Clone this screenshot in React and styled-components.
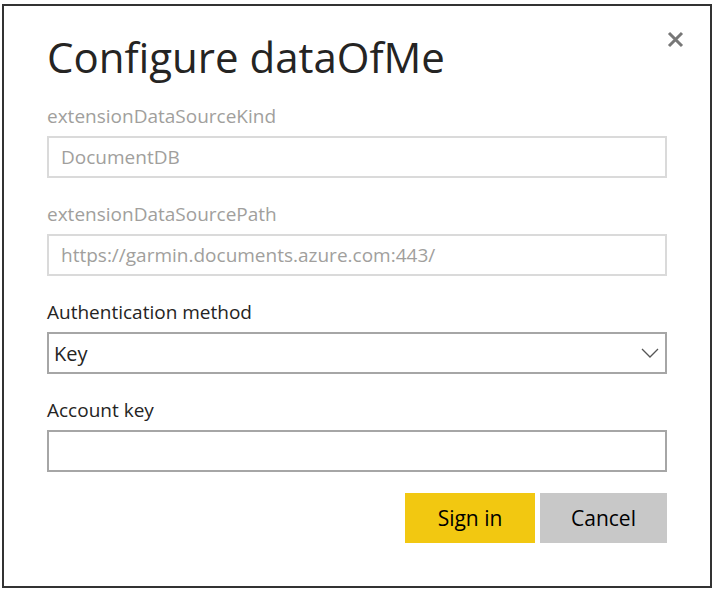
import React, { useState } from "react";
import styled, { createGlobalStyle } from "styled-components";

const GlobalStyle = createGlobalStyle`
  html, body {
    margin: 0;
    padding: 0;
    background: #fff;
    font-family: "Open Sans", "Noto Sans", sans-serif;
  }
  * { box-sizing: border-box; }
`;

const Dialog = styled.div`
  position: relative;
  width: 710px;
  height: 584px;
  margin: 4px 0 0 2px;
  border: 2px solid #333;
  background: #fff;
  padding: 21px 43px 0 43px;
`;

const Title = styled.h1`
  margin: 0 0 17px;
  font-size: 42px;
  font-weight: 400;
  line-height: 60px;
  color: #252423;
`;

const Close = styled.button`
  position: absolute;
  top: 20px;
  right: 22px;
  width: 26px;
  height: 26px;
  padding: 0;
  border: none;
  background: none;
  cursor: pointer;
  display: flex;
  align-items: center;
  justify-content: center;
`;

const Field = styled.div`
  margin-bottom: 24px;
`;

const Label = styled.label`
  display: block;
  font-size: 19px;
  line-height: 24px;
  margin-bottom: 8px;
  color: ${(p) => (p.disabled ? "#a19f9d" : "#252423")};
`;

const Input = styled.input`
  display: block;
  width: 620px;
  height: 42px;
  border: 2px solid ${(p) => (p.disabled ? "#dadada" : "#a6a6a6")};
  background: #fff;
  padding: 0 12px;
  font-family: inherit;
  font-size: 19px;
  color: ${(p) => (p.disabled ? "#a19f9d" : "#252423")};
  outline: none;
  &:disabled { background: #fff; }
`;

const Select = styled.div`
  display: flex;
  align-items: center;
  justify-content: space-between;
  width: 620px;
  height: 42px;
  border: 2px solid #a6a6a6;
  padding: 0 6px 0 5px;
  font-size: 20px;
  color: #252423;
  cursor: pointer;
`;

const Actions = styled.div`
  display: flex;
  justify-content: flex-end;
  gap: 5px;
  width: 620px;
  margin-top: -3px;
`;

const Button = styled.button`
  width: ${(p) => p.w}px;
  height: 50px;
  border: none;
  background: ${(p) => (p.primary ? "#f2c811" : "#c8c8c8")};
  color: #000;
  font-family: inherit;
  font-size: 21px;
  cursor: pointer;
`;

export default function App() {
  const [key, setKey] = useState("");
  return (
    <>
      <GlobalStyle />
      <Dialog>
        <Title>Configure dataOfMe</Title>
        <Close aria-label="Close">
          <svg width="17" height="17" viewBox="0 0 17 17">
            <path d="M2 2 L15 15 M15 2 L2 15" stroke="#777" strokeWidth="3" />
          </svg>
        </Close>
        <Field>
          <Label disabled>extensionDataSourceKind</Label>
          <Input disabled value="DocumentDB" readOnly />
        </Field>
        <Field>
          <Label disabled>extensionDataSourcePath</Label>
          <Input disabled value="https://garmin.documents.azure.com:443/" readOnly />
        </Field>
        <Field>
          <Label>Authentication method</Label>
          <Select>
            <span>Key</span>
            <svg width="18" height="10" viewBox="0 0 18 10">
              <path d="M1 1 L9 9 L17 1" fill="none" stroke="#555" strokeWidth="1.3" />
            </svg>
          </Select>
        </Field>
        <Field>
          <Label>Account key</Label>
          <Input type="password" value={key} onChange={(e) => setKey(e.target.value)} />
        </Field>
        <Actions>
          <Button primary w={130}>Sign in</Button>
          <Button w={127}>Cancel</Button>
        </Actions>
      </Dialog>
    </>
  );
}
